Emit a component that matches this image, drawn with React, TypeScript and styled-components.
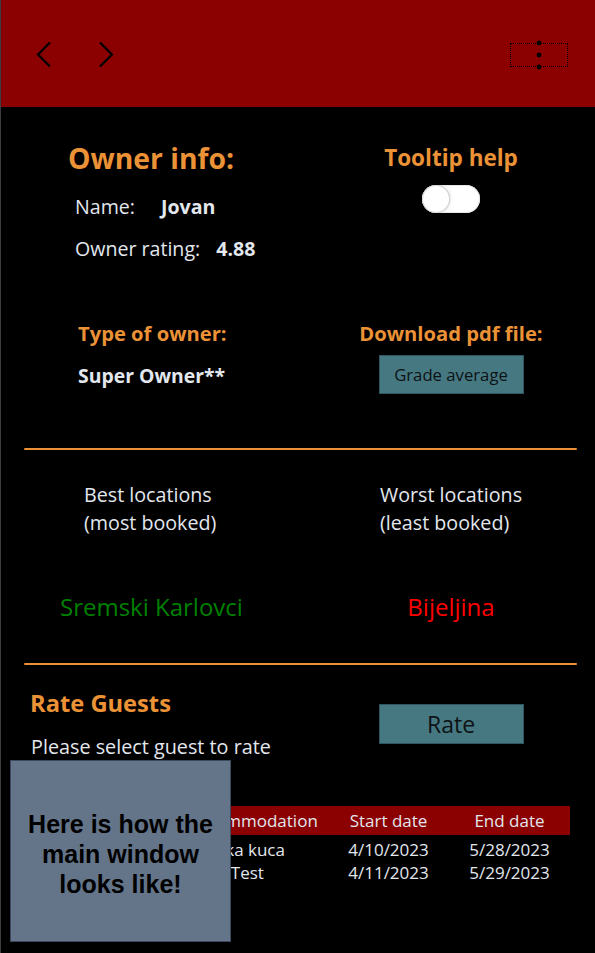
import React from 'react'
import styled, { createGlobalStyle } from 'styled-components'

const orange = '#ec9236'
const light = '#e3e7ee'
const teal = '#467882'

type Booking = {
  guest: string
  accommodation: string
  start: string
  end: string
}

const bookings: Booking[] = [
  { guest: 'Marko Markovic', accommodation: 'Seoska kuca', start: '4/10/2023', end: '5/28/2023' },
  { guest: 'Petar Petrovic', accommodation: 'Kuca Test', start: '4/11/2023', end: '5/29/2023' },
]

export default function App() {
  return (
    <>
      <GlobalStyle />
      <Window>
        <Header>
          <NavButton aria-label="back">
            <svg width="16" height="27" viewBox="0 0 16 27">
              <path d="M14 1.5 L2 13.5 L14 25.5" fill="none" stroke="#000" strokeWidth="2.2" />
            </svg>
          </NavButton>
          <NavButton aria-label="forward">
            <svg width="16" height="27" viewBox="0 0 16 27">
              <path d="M2 1.5 L14 13.5 L2 25.5" fill="none" stroke="#000" strokeWidth="2.2" />
            </svg>
          </NavButton>
          <MenuButton aria-label="menu">
            <svg width="6" height="30" viewBox="0 0 6 30">
              <circle cx="3" cy="3" r="2.4" fill="#000" />
              <circle cx="3" cy="15" r="2.4" fill="#000" />
              <circle cx="3" cy="27" r="2.4" fill="#000" />
            </svg>
          </MenuButton>
        </Header>

        <Content>
          <Row $top={33}>
            <Column>
              <Title $indent={44}>Owner info:</Title>
              <InfoLine $indent={51} $top={18}>
                <span>Name:</span>
                <Strong $gap={26}>Jovan</Strong>
              </InfoLine>
              <InfoLine $indent={51} $top={16}>
                <span>Owner rating:</span>
                <Strong $gap={16}>4.88</Strong>
              </InfoLine>
            </Column>
            <CenterColumn>
              <SubTitle>Tooltip help</SubTitle>
              <Toggle role="switch" aria-checked="false">
                <Knob />
              </Toggle>
            </CenterColumn>
          </Row>

          <Row $top={58}>
            <Column>
              <Label $indent={54}>Type of owner:</Label>
              <Value $indent={54}>Super Owner**</Value>
            </Column>
            <CenterColumn>
              <Label>Download pdf file:</Label>
              <TealButton $size={16.7} $top={9} $height={39}>Grade average</TealButton>
            </CenterColumn>
          </Row>

          <Divider $top={54} />

          <Row $top={31}>
            <Column>
              <Caption $indent={60}>
                Best locations
                <br />
                (most booked)
              </Caption>
              <Place $indent={36} $color="#008000">Sremski Karlovci</Place>
            </Column>
            <Column>
              <Caption $indent={55}>
                Worst locations
                <br />
                (least booked)
              </Caption>
              <Place $center $color="#ff0000">Bijeljina</Place>
            </Column>
          </Row>

          <Divider $top={41} />

          <Row $top={23}>
            <Column>
              <Title $indent={6} $size={23.7} $height={30}>Rate Guests</Title>
              <Hint>Please select guest to rate</Hint>
            </Column>
            <CenterColumn>
              <TealButton $size={23} $top={16} $height={40}>Rate</TealButton>
            </CenterColumn>
          </Row>

          <Table>
            <colgroup>
              <col style={{ width: 151 }} />
              <col style={{ width: 146 }} />
              <col style={{ width: 121 }} />
              <col style={{ width: 121 }} />
            </colgroup>
            <thead>
              <tr>
                <HeadCell>Guest</HeadCell>
                <HeadCell $left>Accommodation</HeadCell>
                <HeadCell>Start date</HeadCell>
                <HeadCell>End date</HeadCell>
              </tr>
            </thead>
            <tbody>
              {bookings.map((b, i) => (
                <tr key={b.start}>
                  <Cell $first={i === 0}>{b.guest}</Cell>
                  <Cell $first={i === 0} $left>{b.accommodation}</Cell>
                  <Cell $first={i === 0}>{b.start}</Cell>
                  <Cell $first={i === 0}>{b.end}</Cell>
                </tr>
              ))}
            </tbody>
          </Table>
        </Content>

        <Overlay>Here is how the main window looks like!</Overlay>
      </Window>
    </>
  )
}

const GlobalStyle = createGlobalStyle`
  html, body {
    margin: 0;
    padding: 0;
    background: #000;
  }
  body {
    font-family: "Open Sans", "Noto Sans", sans-serif;
  }
`

const Window = styled.div`
  position: relative;
  width: 595px;
  min-height: 953px;
  box-sizing: border-box;
  border-left: 1px solid #3a3d42;
  background: #000;
  color: ${light};
`

const Header = styled.header`
  display: flex;
  align-items: center;
  height: 107px;
  padding: 0 27px 0 35px;
  box-sizing: border-box;
  background: #8b0000;
  gap: 46px;
`

const NavButton = styled.button`
  display: flex;
  padding: 0;
  border: none;
  background: transparent;
  margin-top: 2px;
`

const MenuButton = styled.button`
  margin-left: auto;
  margin-top: 3px;
  width: 58px;
  height: 24px;
  padding: 0;
  display: flex;
  align-items: center;
  justify-content: center;
  border: 1px dotted #000;
  background: transparent;
  overflow: visible;

  svg {
    overflow: visible;
  }
`

const Content = styled.main`
  padding: 0 18px 0 23px;
`

const Row = styled.section<{ $top: number }>`
  display: grid;
  grid-template-columns: 1fr 252px;
  margin-top: ${p => p.$top}px;
`

const Column = styled.div`
  display: flex;
  flex-direction: column;
`

const CenterColumn = styled.div`
  display: flex;
  flex-direction: column;
  align-items: center;
`

const Title = styled.h1<{ $indent: number; $size?: number; $height?: number }>`
  margin: 0 0 0 ${p => p.$indent}px;
  font-size: ${p => p.$size ?? 28.3}px;
  line-height: ${p => p.$height ?? 36}px;
  font-weight: 700;
  color: ${orange};
  white-space: nowrap;
`

const SubTitle = styled.h2`
  margin: 0;
  font-size: 22.5px;
  line-height: 36px;
  font-weight: 700;
  color: ${orange};
`

const Toggle = styled.div`
  position: relative;
  margin-top: 9px;
  width: 58px;
  height: 28px;
  border-radius: 14px;
  background: linear-gradient(to right, #e4e4e4 0%, #ffffff 55%);
  box-shadow: inset 0 0 0 1px #e6e6e6;
`

const Knob = styled.span`
  position: absolute;
  left: 1px;
  top: 1px;
  width: 26px;
  height: 26px;
  border-radius: 50%;
  background: #fff;
  box-shadow: 0 0 0 1px #d4d4d4, 1px 0 2px rgba(0, 0, 0, 0.25);
`

const InfoLine = styled.div<{ $indent: number; $top: number }>`
  display: flex;
  margin: ${p => p.$top}px 0 0 ${p => p.$indent}px;
  font-size: 19.6px;
  line-height: 26px;
  white-space: nowrap;
`

const Strong = styled.span<{ $gap: number }>`
  margin-left: ${p => p.$gap}px;
  font-weight: 700;
`

const Label = styled.div<{ $indent?: number }>`
  margin-left: ${p => p.$indent ?? 0}px;
  font-size: 20.2px;
  line-height: 26px;
  font-weight: 700;
  color: ${orange};
  white-space: nowrap;
`

const Value = styled.div<{ $indent: number }>`
  margin: 17px 0 0 ${p => p.$indent}px;
  font-size: 19.4px;
  line-height: 26px;
  font-weight: 700;
`

const TealButton = styled.button<{ $size: number; $top: number; $height: number }>`
  margin-top: ${p => p.$top}px;
  width: 145px;
  height: ${p => p.$height}px;
  padding: 0;
  border: 1px solid #2d5660;
  background: ${teal};
  color: #0d1214;
  font-family: "Open Sans", "Noto Sans", sans-serif;
  font-size: ${p => p.$size}px;
`

const Divider = styled.hr<{ $top: number }>`
  margin: ${p => p.$top}px 0 0;
  height: 2px;
  border: none;
  border-radius: 1px;
  background: ${orange};
`

const Caption = styled.p<{ $indent: number }>`
  margin: 0 0 0 ${p => p.$indent}px;
  font-size: 19.7px;
  line-height: 28px;
  white-space: nowrap;
`

const Place = styled.div<{ $indent?: number; $center?: boolean; $color: string }>`
  margin: 55px 0 0 ${p => p.$indent ?? 0}px;
  text-align: ${p => (p.$center ? 'center' : 'left')};
  font-size: 24px;
  line-height: 30px;
  color: ${p => p.$color};
  white-space: nowrap;
`

const Hint = styled.p`
  margin: 16px 0 0 7px;
  font-size: 19.8px;
  line-height: 26px;
  white-space: nowrap;
`

const Table = styled.table`
  margin: 46px 0 0 7px;
  width: 539px;
  border-collapse: collapse;
  table-layout: fixed;
  font-size: 17px;
`

const HeadCell = styled.th<{ $left?: boolean }>`
  height: 29px;
  padding: 0 6px;
  background: #8b0000;
  font-weight: 400;
  text-align: ${p => (p.$left ? 'left' : 'center')};
  white-space: nowrap;
  overflow: hidden;
`

const Cell = styled.td<{ $first: boolean; $left?: boolean }>`
  height: 23px;
  padding: ${p => (p.$first ? '3px' : '0')} 6px 0;
  line-height: 23px;
  text-align: ${p => (p.$left ? 'left' : 'center')};
  white-space: nowrap;
  overflow: hidden;
`

const Overlay = styled.div`
  position: absolute;
  left: 9px;
  top: 760px;
  width: 221px;
  height: 182px;
  box-sizing: border-box;
  padding: 6px 6px 0;
  display: flex;
  align-items: center;
  justify-content: center;
  text-align: center;
  border: 1px solid #3b4a5e;
  background: #64758a;
  color: #000;
  font-family: "Liberation Sans", Arial, sans-serif;
  font-weight: 700;
  font-size: 25px;
  line-height: 30px;
`
